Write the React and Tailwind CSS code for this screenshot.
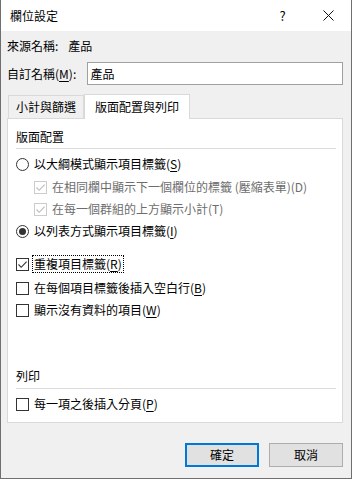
import React from 'react'

const font = { fontFamily: '"Noto Sans CJK TC", "Noto Sans", sans-serif' }

function Radio({ checked }) {
  return (
    <span className="w-[13px] h-[13px] rounded-full border border-[#333333] bg-white flex items-center justify-center shrink-0">
      {checked && <span className="w-[7px] h-[7px] rounded-full bg-[#333333]" />}
    </span>
  )
}

function Check({ checked, disabled }) {
  return (
    <span className={`w-[13px] h-[13px] border bg-white shrink-0 flex items-center justify-center ${disabled ? 'border-[#cccccc]' : 'border-[#333333]'}`}>
      {checked && (
        <svg width="11" height="11" viewBox="0 0 11 11">
          <path d="M1.5 5.5 L4.2 8.3 L9.6 2.6" fill="none" stroke={disabled ? '#bcbcbc' : '#333333'} strokeWidth="1.1" />
        </svg>
      )}
    </span>
  )
}

function Key({ k }) {
  return <span>(<span className="underline underline-offset-2">{k}</span>)</span>
}

export default function App() {
  return (
    <div style={font} className="w-[352px] h-[479px] bg-[#f0f0f0] border-x border-b border-[#6f6f6f] flex flex-col text-[12px] text-black leading-[16px] overflow-hidden">
      <div className="h-[31px] bg-white flex items-center shrink-0">
        <span className="pl-[9px] flex-1">欄位設定</span>
        <span className="w-[45px] h-full flex items-center justify-center text-[13px]">?</span>
        <span className="w-[46px] h-full flex items-center justify-center">
          <svg width="11" height="11" viewBox="0 0 11 11">
            <path d="M0.5 0.5 L10.5 10.5 M10.5 0.5 L0.5 10.5" stroke="#111" strokeWidth="1" />
          </svg>
        </span>
      </div>

      <div className="flex flex-col pl-[6px] pr-[8px]">
        <div className="mt-[7px] h-[16px] flex items-center">
          <span>來源名稱:</span>
          <span className="ml-[10px]">產品</span>
        </div>
        <div className="mt-[8px] h-[23px] flex items-center">
          <span className="w-[80px]">自訂名稱<Key k="M" />:</span>
          <div className="w-[258px] h-[23px] border border-[#a0a0a0] bg-white flex items-center pl-[3px]">產品</div>
        </div>

        <div className="mt-[9px] flex items-end h-[24px] relative z-10">
          <div className="ml-[1px] w-[76px] h-[23px] border border-b-0 border-[#d9d9d9] bg-[#f0f0f0] flex items-center justify-center">小計與篩選</div>
          <div className="w-[106px] h-[25px] -mb-px border border-b-0 border-[#d9d9d9] bg-white flex items-center justify-center pb-[1px]">版面配置與列印</div>
        </div>

        <div className="h-[305px] border border-[#d9d9d9] bg-white flex flex-col pl-[8px] pr-[6px]">
          <div className="mt-[10px] h-[16px]">版面配置</div>
          <div className="mt-[3px] h-px bg-[#dcdcdc]" />
          <div className="mt-[5px] h-[20px] flex items-center gap-[5px]">
            <Radio />
            <span>以大綱模式顯示項目標籤<Key k="S" /></span>
          </div>
          <div className="mt-[3px] h-[20px] flex items-center gap-[5px] pl-[18px] text-[#6d6d6d]">
            <Check checked disabled />
            <span>在相同欄中顯示下一個欄位的標籤 (壓縮表單)(D)</span>
          </div>
          <div className="mt-[2px] h-[20px] flex items-center gap-[5px] pl-[18px] text-[#6d6d6d]">
            <Check checked disabled />
            <span>在每一個群組的上方顯示小計(T)</span>
          </div>
          <div className="mt-[2px] h-[20px] flex items-center gap-[5px]">
            <Radio checked />
            <span>以列表方式顯示項目標籤<Key k="I" /></span>
          </div>
          <div className="mt-[13px] h-[20px] flex items-center gap-[3px]">
            <Check checked />
            <span className="border border-dotted border-black px-[1px] h-[18px] flex items-center">重複項目標籤<Key k="R" /></span>
          </div>
          <div className="mt-[4px] h-[20px] flex items-center gap-[5px]">
            <Check />
            <span>在每個項目標籤後插入空白行<Key k="B" /></span>
          </div>
          <div className="mt-[2px] h-[20px] flex items-center gap-[5px]">
            <Check />
            <span>顯示沒有資料的項目<Key k="W" /></span>
          </div>
          <div className="mt-[48px] h-[16px]">列印</div>
          <div className="mt-[4px] h-px bg-[#dcdcdc]" />
          <div className="mt-[5px] h-[20px] flex items-center gap-[5px]">
            <Check />
            <span>每一項之後插入分頁<Key k="P" /></span>
          </div>
        </div>

        <div className="mt-[20px] flex justify-end gap-[10px] pr-[-1px]">
          <button className="w-[74px] h-[24px] border-2 border-[#0078d7] bg-[#e1e1e1] flex items-center justify-center">確定</button>
          <button className="w-[74px] h-[24px] border border-[#adadad] bg-[#e1e1e1] flex items-center justify-center">取消</button>
        </div>
      </div>
    </div>
  )
}
